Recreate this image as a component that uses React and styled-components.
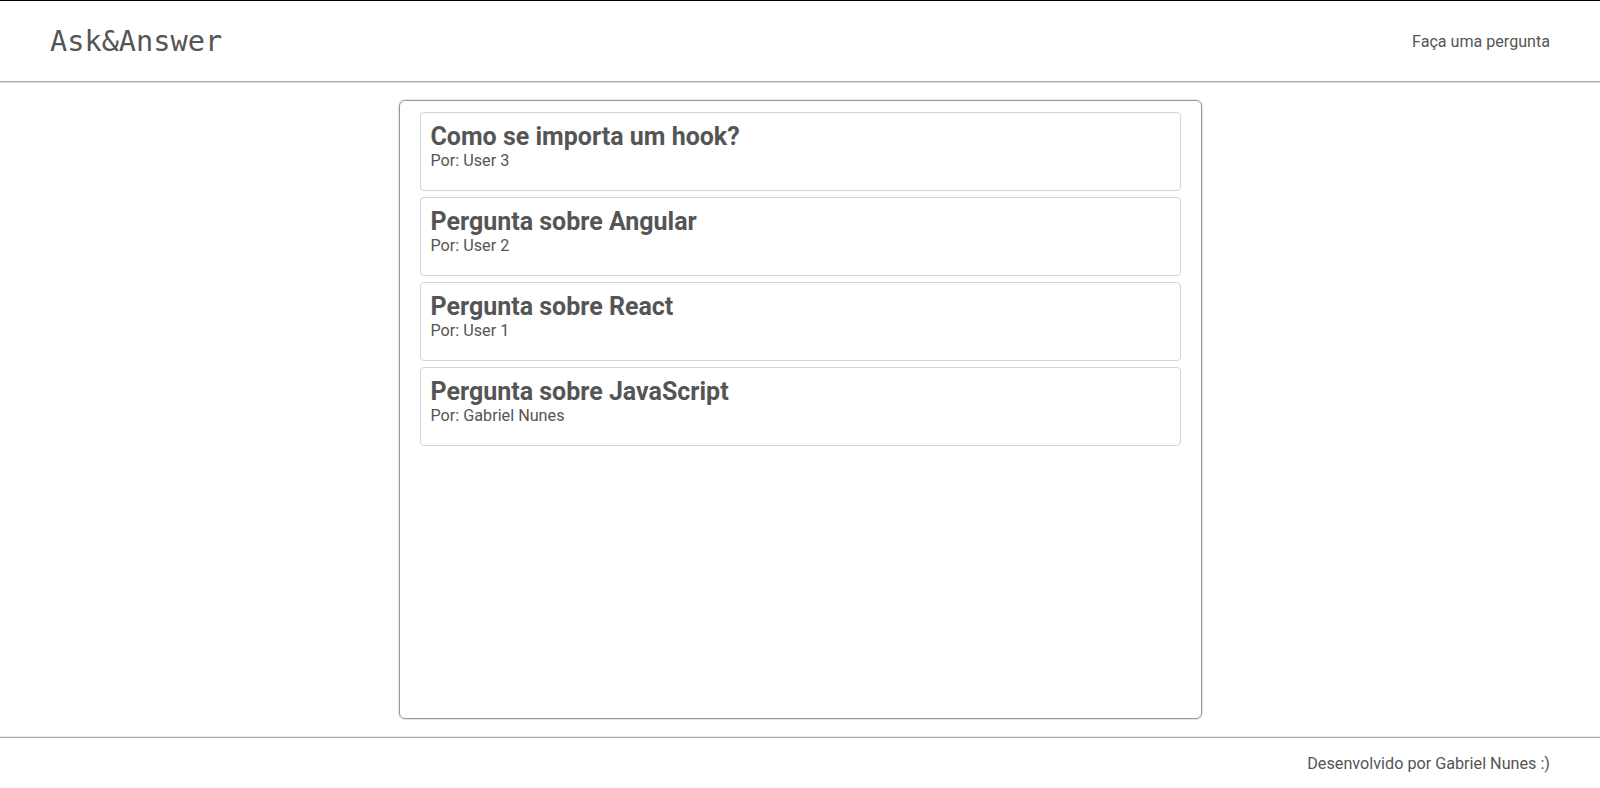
import React from 'react'
import styled, { createGlobalStyle } from 'styled-components'

const GlobalStyle = createGlobalStyle`
  * {
    box-sizing: border-box;
  }
  body {
    margin: 0;
    background: #fff;
    font-family: Roboto, "Liberation Sans", sans-serif;
    color: #555;
  }
`;

const Page = styled.div`
  display: flex;
  flex-direction: column;
  min-height: 100vh;
  border-top: 1px solid #000;
`;

const Header = styled.header`
  display: flex;
  align-items: center;
  justify-content: space-between;
  height: 81px;
  padding: 0 50px;
  border-bottom: 1px solid #aaa;
  box-shadow: 0 1px 1px rgba(0, 0, 0, 0.12);
`;

const Logo = styled.h1`
  margin: 0;
  font-family: "DejaVu Sans Mono", "Liberation Mono", monospace;
  font-weight: normal;
  font-size: 28.6px;
  color: #555;
`;

const NavLink = styled.a`
  font-size: 16.1px;
  color: #555;
  text-decoration: none;
  cursor: pointer;
`;

const Main = styled.main`
  flex: 1;
  display: flex;
  justify-content: center;
  padding: 18px 0 18px;
`;

const Board = styled.section`
  width: 803px;
  height: 619px;
  display: flex;
  flex-direction: column;
  gap: 6px;
  padding: 11px 20px;
  border: 1px solid #999;
  border-radius: 6px;
  box-shadow: 0 0 2px rgba(0, 0, 0, 0.35);
`;

const QuestionCard = styled.article`
  flex-shrink: 0;
  height: 79px;
  padding: 9px 10px 20px;
  border: 1px solid #d4d4d4;
  border-radius: 4px;
`;

const QuestionTitle = styled.h2`
  margin: 0;
  font-size: 25px;
  font-weight: 700;
  line-height: 29px;
  color: #555;
`;

const Author = styled.p`
  margin: 0;
  font-size: 16.2px;
  line-height: 19px;
  color: #555;
`;

const Footer = styled.footer`
  display: flex;
  align-items: center;
  justify-content: flex-end;
  height: 51px;
  padding: 0 50px;
  border-top: 1px solid #aaa;
  box-shadow: 0 -1px 1px rgba(0, 0, 0, 0.08);
  font-size: 16.2px;
`;

const questions = [
  { title: 'Como se importa um hook?', author: 'User 3' },
  { title: 'Pergunta sobre Angular', author: 'User 2' },
  { title: 'Pergunta sobre React', author: 'User 1' },
  { title: 'Pergunta sobre JavaScript', author: 'Gabriel Nunes' },
]

export default function App() {
  return (
    <Page>
      <GlobalStyle />
      <Header>
        <Logo>Ask&amp;Answer</Logo>
        <NavLink>Faça uma pergunta</NavLink>
      </Header>
      <Main>
        <Board>
          {questions.map((q) => (
            <QuestionCard key={q.title}>
              <QuestionTitle>{q.title}</QuestionTitle>
              <Author>Por: {q.author}</Author>
            </QuestionCard>
          ))}
        </Board>
      </Main>
      <Footer>Desenvolvido por Gabriel Nunes :)</Footer>
    </Page>
  )
}
